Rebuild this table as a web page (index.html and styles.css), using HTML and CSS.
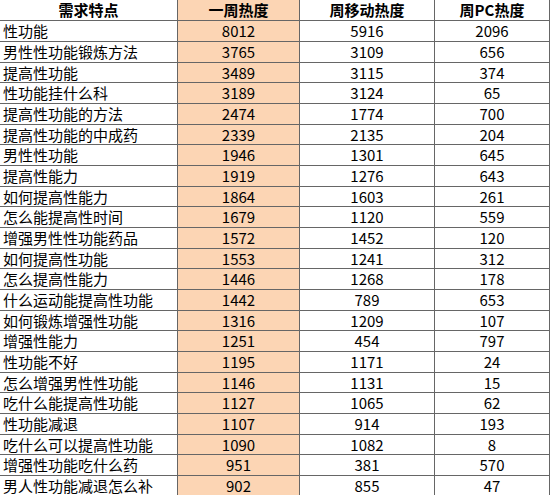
FILE: index.html
```html
<!DOCTYPE html>
<html lang="zh-CN">
<head>
<meta charset="utf-8">
<title>需求特点</title>
<link rel="stylesheet" href="styles.css">
</head>
<body>
<table class="sheet">
  <colgroup>
    <col class="c1"><col class="c2"><col class="c3"><col class="c4">
  </colgroup>
  <thead>
    <tr><th>需求特点</th><th class="hot">一周热度</th><th>周移动热度</th><th>周PC热度</th></tr>
  </thead>
  <tbody>
    <tr><td class="name">性功能</td><td class="hot">8012</td><td>5916</td><td>2096</td></tr>
    <tr><td class="name">男性性功能锻炼方法</td><td class="hot">3765</td><td>3109</td><td>656</td></tr>
    <tr><td class="name">提高性功能</td><td class="hot">3489</td><td>3115</td><td>374</td></tr>
    <tr><td class="name">性功能挂什么科</td><td class="hot">3189</td><td>3124</td><td>65</td></tr>
    <tr><td class="name">提高性功能的方法</td><td class="hot">2474</td><td>1774</td><td>700</td></tr>
    <tr><td class="name">提高性功能的中成药</td><td class="hot">2339</td><td>2135</td><td>204</td></tr>
    <tr><td class="name">男性性功能</td><td class="hot">1946</td><td>1301</td><td>645</td></tr>
    <tr><td class="name">提高性能力</td><td class="hot">1919</td><td>1276</td><td>643</td></tr>
    <tr><td class="name">如何提高性能力</td><td class="hot">1864</td><td>1603</td><td>261</td></tr>
    <tr><td class="name">怎么能提高性时间</td><td class="hot">1679</td><td>1120</td><td>559</td></tr>
    <tr><td class="name">增强男性性功能药品</td><td class="hot">1572</td><td>1452</td><td>120</td></tr>
    <tr><td class="name">如何提高性功能</td><td class="hot">1553</td><td>1241</td><td>312</td></tr>
    <tr><td class="name">怎么提高性能力</td><td class="hot">1446</td><td>1268</td><td>178</td></tr>
    <tr><td class="name">什么运动能提高性功能</td><td class="hot">1442</td><td>789</td><td>653</td></tr>
    <tr><td class="name">如何锻炼增强性功能</td><td class="hot">1316</td><td>1209</td><td>107</td></tr>
    <tr><td class="name">增强性能力</td><td class="hot">1251</td><td>454</td><td>797</td></tr>
    <tr><td class="name">性功能不好</td><td class="hot">1195</td><td>1171</td><td>24</td></tr>
    <tr><td class="name">怎么增强男性性功能</td><td class="hot">1146</td><td>1131</td><td>15</td></tr>
    <tr><td class="name">吃什么能提高性功能</td><td class="hot">1127</td><td>1065</td><td>62</td></tr>
    <tr><td class="name">性功能减退</td><td class="hot">1107</td><td>914</td><td>193</td></tr>
    <tr><td class="name">吃什么可以提高性功能</td><td class="hot">1090</td><td>1082</td><td>8</td></tr>
    <tr><td class="name">增强性功能吃什么药</td><td class="hot">951</td><td>381</td><td>570</td></tr>
    <tr><td class="name">男人性功能减退怎么补</td><td class="hot">902</td><td>855</td><td>47</td></tr>
  </tbody>
</table>
</body>
</html>
```

FILE: styles.css
```css
html, body {
  margin: 0;
  padding: 0;
  background: #ffffff;
}

body {
  width: 550px;
  height: 495px;
  overflow: hidden;
  font-family: "Noto Sans CJK SC", "Noto Sans", sans-serif;
  font-size: 15px;
  color: #000000;
}

.sheet {
  border-collapse: separate;
  border-spacing: 0;
  table-layout: fixed;
  width: 550px;
}

.c1 { width: 178px; }
.c2 { width: 122px; }
.c3 { width: 135px; }
.c4 { width: 115px; }

.sheet th,
.sheet td {
  padding: 0;
  height: 21px;
  box-sizing: border-box;
  line-height: 18px;
  text-align: center;
  vertical-align: middle;
  white-space: nowrap;
  overflow: hidden;
  border-bottom: 1px solid #666666;
  border-right: 1px solid #666666;
}

.sheet th {
  font-weight: bold;
}

.sheet tbody tr:nth-child(3n) td {
  height: 20px;
}

.sheet td.name {
  text-align: left;
  padding-left: 3px;
}

.sheet .hot {
  background: #fcd5b4;
}
```
